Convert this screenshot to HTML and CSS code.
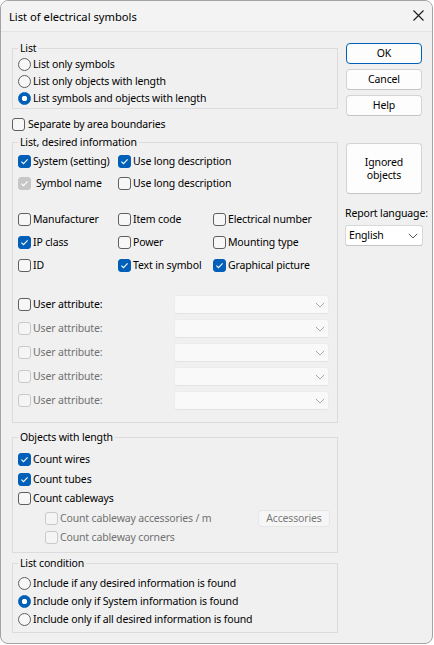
FILE: index.html
```html
<!DOCTYPE html>
<html>
<head>
<meta charset="utf-8">
<link rel="stylesheet" href="styles.css">
</head>
<body>
<div class="window">
  <div class="titlebar">
    <span class="title">List of electrical symbols</span>
    <span class="close"><svg width="11" height="11" viewBox="0 0 11 11"><path d="M0.5 0.5 L10.5 10.5 M10.5 0.5 L0.5 10.5" stroke="#1b1b1b" stroke-width="1.1" fill="none"/></svg></span>
  </div>
  <div class="body">
    <div class="main">
      <fieldset class="group g1">
        <legend>List</legend>
        <div class="opt r17"><span class="radio"></span>List only symbols</div>
        <div class="opt r17"><span class="radio"></span>List only objects with length</div>
        <div class="opt r17"><span class="radio on"></span>List symbols and objects with length</div>
      </fieldset>

      <div class="opt r17 sep"><span class="box"></span>Separate by area boundaries</div>

      <fieldset class="group g2">
        <legend>List, desired information</legend>
        <div class="cols row-sys">
          <div class="opt c1"><span class="box on"><svg width="11" height="11" viewBox="0 0 11 11"><path d="M2.4 5.6 L4.5 7.7 L8.6 3.3" stroke="#fff" stroke-width="1.1" fill="none"/></svg></span>System (setting)</div>
          <div class="opt c2"><span class="box on"><svg width="11" height="11" viewBox="0 0 11 11"><path d="M2.4 5.6 L4.5 7.7 L8.6 3.3" stroke="#fff" stroke-width="1.1" fill="none"/></svg></span>Use long description</div>
        </div>
        <div class="cols row-sym">
          <div class="opt c1"><span class="box dison"><svg width="11" height="11" viewBox="0 0 11 11"><path d="M2.4 5.6 L4.5 7.7 L8.6 3.3" stroke="#fff" stroke-width="1.1" fill="none"/></svg></span><span class="symtext">Symbol name</span></div>
          <div class="opt c2"><span class="box"></span>Use long description</div>
        </div>
        <div class="cols row23 first">
          <div class="opt c1"><span class="box"></span>Manufacturer</div>
          <div class="opt c2"><span class="box"></span>Item code</div>
          <div class="opt c3"><span class="box"></span>Electrical number</div>
        </div>
        <div class="cols row23">
          <div class="opt c1"><span class="box on"><svg width="11" height="11" viewBox="0 0 11 11"><path d="M2.4 5.6 L4.5 7.7 L8.6 3.3" stroke="#fff" stroke-width="1.1" fill="none"/></svg></span>IP class</div>
          <div class="opt c2"><span class="box"></span>Power</div>
          <div class="opt c3"><span class="box"></span>Mounting type</div>
        </div>
        <div class="cols row23">
          <div class="opt c1"><span class="box"></span>ID</div>
          <div class="opt c2"><span class="box on"><svg width="11" height="11" viewBox="0 0 11 11"><path d="M2.4 5.6 L4.5 7.7 L8.6 3.3" stroke="#fff" stroke-width="1.1" fill="none"/></svg></span>Text in symbol</div>
          <div class="opt c3"><span class="box on"><svg width="11" height="11" viewBox="0 0 11 11"><path d="M2.4 5.6 L4.5 7.7 L8.6 3.3" stroke="#fff" stroke-width="1.1" fill="none"/></svg></span>Graphical picture</div>
        </div>
        <div class="ua-list">
          <div class="ua">
            <div class="opt ua-label"><span class="box"></span>User attribute:</div>
            <div class="cb"><svg width="10" height="6" viewBox="0 0 10 6"><path d="M0.8 0.8 L5 5 L9.2 0.8" stroke="#a8a8a8" stroke-width="1" fill="none"/></svg></div>
          </div>
          <div class="ua">
            <div class="opt ua-label dis"><span class="box dis"></span>User attribute:</div>
            <div class="cb"><svg width="10" height="6" viewBox="0 0 10 6"><path d="M0.8 0.8 L5 5 L9.2 0.8" stroke="#a8a8a8" stroke-width="1" fill="none"/></svg></div>
          </div>
          <div class="ua">
            <div class="opt ua-label dis"><span class="box dis"></span>User attribute:</div>
            <div class="cb"><svg width="10" height="6" viewBox="0 0 10 6"><path d="M0.8 0.8 L5 5 L9.2 0.8" stroke="#a8a8a8" stroke-width="1" fill="none"/></svg></div>
          </div>
          <div class="ua">
            <div class="opt ua-label dis"><span class="box dis"></span>User attribute:</div>
            <div class="cb"><svg width="10" height="6" viewBox="0 0 10 6"><path d="M0.8 0.8 L5 5 L9.2 0.8" stroke="#a8a8a8" stroke-width="1" fill="none"/></svg></div>
          </div>
          <div class="ua">
            <div class="opt ua-label dis"><span class="box dis"></span>User attribute:</div>
            <div class="cb"><svg width="10" height="6" viewBox="0 0 10 6"><path d="M0.8 0.8 L5 5 L9.2 0.8" stroke="#a8a8a8" stroke-width="1" fill="none"/></svg></div>
          </div>
        </div>
      </fieldset>

      <fieldset class="group g3">
        <legend>Objects with length</legend>
        <div class="opt r195"><span class="box on"><svg width="11" height="11" viewBox="0 0 11 11"><path d="M2.4 5.6 L4.5 7.7 L8.6 3.3" stroke="#fff" stroke-width="1.1" fill="none"/></svg></span>Count wires</div>
        <div class="opt r195"><span class="box on"><svg width="11" height="11" viewBox="0 0 11 11"><path d="M2.4 5.6 L4.5 7.7 L8.6 3.3" stroke="#fff" stroke-width="1.1" fill="none"/></svg></span>Count tubes</div>
        <div class="opt r195"><span class="box"></span>Count cableways</div>
        <div class="opt r195 sub dis"><span class="box dis"></span>Count cableway accessories / m<span class="btn-acc">Accessories</span></div>
        <div class="opt r195 sub dis"><span class="box dis"></span>Count cableway corners</div>
      </fieldset>

      <fieldset class="group g4">
        <legend>List condition</legend>
        <div class="opt r18"><span class="radio"></span>Include if any desired information is found</div>
        <div class="opt r18"><span class="radio on"></span>Include only if System information is found</div>
        <div class="opt r18"><span class="radio"></span>Include only if all desired information is found</div>
      </fieldset>
    </div>

    <div class="side">
      <div class="btn default">OK</div>
      <div class="btn">Cancel</div>
      <div class="btn">Help</div>
      <div class="btn tall">Ignored<br>objects</div>
      <div class="lang-label">Report language:</div>
      <div class="lang">English<svg width="10" height="6" viewBox="0 0 10 6"><path d="M0.8 0.8 L5 5 L9.2 0.8" stroke="#5a5a5a" stroke-width="1" fill="none"/></svg></div>
    </div>
  </div>
</div>
</body>
</html>
```
FILE: styles.css
```css
* { box-sizing: border-box; }
html, body { margin: 0; padding: 0; background: #ffffff; }
body {
  font-family: "Noto Sans", "Open Sans", sans-serif;
  font-size: 10.5px;
  letter-spacing: -0.15px;
  line-height: 15px;
  color: #000;
}
.window {
  width: 433px;
  height: 644px;
  border: 1px solid #a3a3a3;
  border-radius: 8px;
  background: #f0f0f0;
  overflow: hidden;
}
.titlebar {
  height: 31px;
  background: #f3f3f3;
  border-bottom: 1px solid #e4e4e4;
  display: flex;
  align-items: center;
  padding-left: 8px;
}
.title { font-size: 11.2px; letter-spacing: 0; }
.close {
  margin-left: auto;
  margin-right: 8px;
  display: flex;
  margin-top: -2px;
}
.body {
  display: flex;
  padding: 9px 0 0 11px;
}
.main { width: 326px; flex: none; }
.side {
  width: 76px;
  margin-left: 8px;
  padding-top: 2px;
  display: flex;
  flex-direction: column;
  flex: none;
}
fieldset.group {
  margin: 0;
  padding: 0 7px 0 5px;
  border: 1px solid #dcdcdc;
  min-width: 0;
}
legend {
  padding: 0 2px;
  line-height: 15px;
  height: 15px;
}
.opt {
  display: flex;
  align-items: center;
  white-space: nowrap;
}
.r17 { height: 17px; }
.r18 { height: 18px; }
.r195 { height: 19.5px; }
.radio, .box {
  width: 13px;
  height: 13px;
  flex: none;
  border: 1px solid #5f5f5f;
  background: #f7f7f7;
  margin-right: 2px;
  display: flex;
  align-items: center;
  justify-content: center;
}
.radio { border-radius: 50%; }
.radio.on {
  border-color: #005fb8;
  background: radial-gradient(circle, #ffffff 0 2.4px, #005fb8 3px);
}
.box { border-radius: 3px; }
.box.on { background: #005fb8; border-color: #005fb8; }
.box.dis { border-color: #c9c9c9; background: #f5f5f5; }
.box.dison { background: #c6c6c6; border-color: #c6c6c6; }
.dis { color: #707070; }

fieldset.g1 { padding-bottom: 1px; }
.sep { margin-top: 7px; }
.sep .box { margin-right: 3px; }

fieldset.g2 { margin-top: 2px; padding-bottom: 12px; }
.cols { display: flex; }
.c1 { width: 100px; flex: none; }
.c2 { width: 95px; flex: none; }
.c3 { flex: 1; }
.row-sys { height: 21px; margin-top: 1px; }
.row-sym { height: 22px; }
.symtext { margin-left: 3px; }
.row23 { height: 23px; }
.row23.first { margin-top: 14px; }
.ua-list {
  margin-top: 18px;
  display: flex;
  flex-direction: column;
  gap: 5px;
}
.ua { display: flex; align-items: center; height: 19px; }
.ua-label { width: 156px; flex: none; }
.cb {
  width: 155px;
  height: 19px;
  background: #f9f9f9;
  border: 1px solid #ececec;
  border-bottom-color: #e3e3e3;
  border-radius: 3px;
  display: flex;
  align-items: center;
  justify-content: flex-end;
  padding-right: 3px;
}

fieldset.g3 { margin-top: 7px; padding-top: 5px; padding-bottom: 4.5px; }
.sub { padding-left: 27px; }
.btn-acc {
  margin-left: auto;
  width: 72px;
  height: 17px;
  background: #f6f6f6;
  border: 1px solid #e6e6e6;
  border-radius: 4px;
  color: #7a7a7a;
  display: flex;
  align-items: center;
  justify-content: center;
}

fieldset.g4 { margin-top: 3px; padding-top: 3px; padding-bottom: 4px; }

.btn {
  height: 21px;
  background: #fdfdfd;
  border: 1px solid #d3d3d3;
  border-bottom-color: #c4c4c4;
  border-radius: 4px;
  display: flex;
  align-items: center;
  justify-content: center;
  text-align: center;
  margin-bottom: 5px;
}
.btn.default { border-color: #005fb8; }
.btn.tall {
  height: 51px;
  margin-top: 22px;
  margin-bottom: 0;
  line-height: 13px;
}
.lang-label { margin-top: 12px; margin-left: -1px; white-space: nowrap; }
.lang {
  margin-top: 4px;
  margin-left: -1px;
  width: 78px;
  height: 21px;
  background: #ffffff;
  border: 1px solid #d8d8d8;
  border-bottom-color: #c4c4c4;
  border-radius: 3px;
  display: flex;
  align-items: center;
  justify-content: space-between;
  padding: 0 4px 0 3px;
}
```
